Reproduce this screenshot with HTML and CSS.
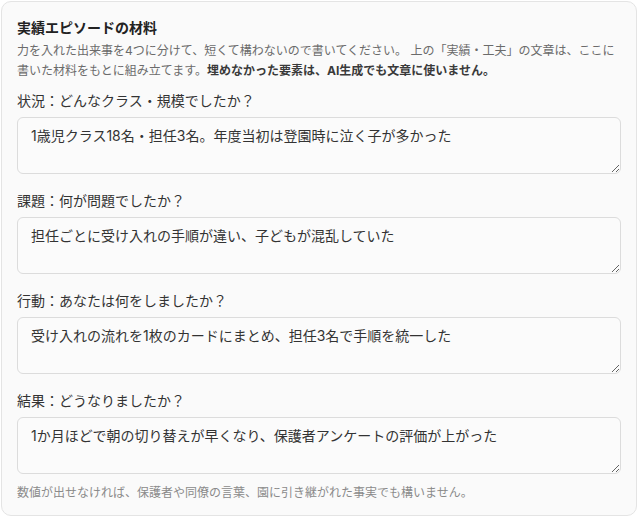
FILE: index.html
```html
<!DOCTYPE html>
<html lang="ja">
<head>
<meta charset="utf-8">
<link rel="stylesheet" href="styles.css">
</head>
<body>
<div class="card">
  <h2 class="title">実績エピソードの材料</h2>
  <p class="desc">力を入れた出来事を4つに分けて、短くて構わないので書いてください。 上の「実績・工夫」の文章は、ここに書いた材料をもとに組み立てます。<strong>埋めなかった要素は、AI生成でも文章に使いません。</strong></p>
  <div class="fields">
    <label class="field">
      <span class="label">状況：どんなクラス・規模でしたか？</span>
      <textarea class="input">1歳児クラス18名・担任3名。年度当初は登園時に泣く子が多かった</textarea>
    </label>
    <label class="field">
      <span class="label">課題：何が問題でしたか？</span>
      <textarea class="input">担任ごとに受け入れの手順が違い、子どもが混乱していた</textarea>
    </label>
    <label class="field">
      <span class="label">行動：あなたは何をしましたか？</span>
      <textarea class="input">受け入れの流れを1枚のカードにまとめ、担任3名で手順を統一した</textarea>
    </label>
    <label class="field">
      <span class="label">結果：どうなりましたか？</span>
      <textarea class="input">1か月ほどで朝の切り替えが早くなり、保護者アンケートの評価が上がった</textarea>
    </label>
  </div>
  <p class="note">数値が出せなければ、保護者や同僚の言葉、園に引き継がれた事実でも構いません。</p>
</div>
</body>
</html>
```

FILE: styles.css
```css
html, body {
  margin: 0;
  padding: 0;
  background: #ffffff;
}
body {
  font-family: "Inter", "Noto Sans CJK JP", sans-serif;
  color: #333333;
  padding: 1px 1px 0 1px;
  text-spacing-trim: space-all;
}
.card {
  box-sizing: border-box;
  width: 636px;
  height: 515px;
  background: #fafafa;
  border: 1px solid #e4e4e4;
  border-radius: 10px;
  padding: 15px 15px 0 15px;
}
.title {
  margin: 0;
  font-size: 14px;
  line-height: 22px;
  font-weight: 700;
  color: #222222;
}
.desc {
  margin: 2px 0 0 0;
  font-size: 12px;
  line-height: 20px;
  color: #6b6b6b;
}
.desc strong {
  color: #3a3a3a;
  font-weight: 700;
}
.fields {
  margin-top: 10px;
  display: flex;
  flex-direction: column;
  gap: 17px;
}
.field {
  display: flex;
  flex-direction: column;
  gap: 6px;
}
.label {
  font-size: 14px;
  line-height: 20px;
  color: #333333;
}
.input {
  box-sizing: border-box;
  width: 100%;
  height: 57px;
  margin: 0;
  padding: 7px 13px;
  font-family: inherit;
  font-size: 14px;
  line-height: 21px;
  color: #333333;
  background: #fbfbfb;
  border: 1px solid #dcdcdc;
  border-radius: 6px;
  resize: vertical;
  outline: none;
  text-spacing-trim: space-all;
}
.note {
  margin: 9px 0 0 0;
  font-size: 12px;
  line-height: 20px;
  color: #8a8a8a;
}
```
